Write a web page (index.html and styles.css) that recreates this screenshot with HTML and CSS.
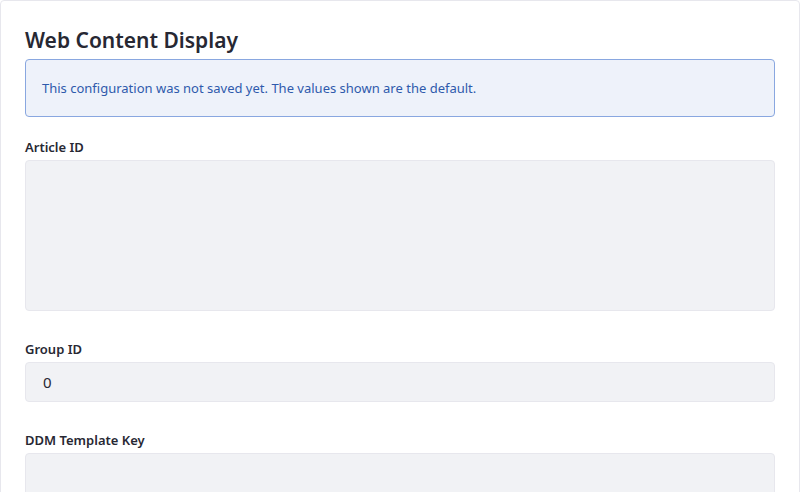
FILE: index.html
```html
<!DOCTYPE html>
<html>
<head>
<meta charset="utf-8">
<link rel="stylesheet" href="styles.css">
</head>
<body>
<div class="sheet">
  <h2 class="sheet-title">Web Content Display</h2>
  <div class="alert">This configuration was not saved yet. The values shown are the default.</div>
  <div class="form-group">
    <label class="label">Article ID</label>
    <div class="field field-area"></div>
  </div>
  <div class="form-group">
    <label class="label">Group ID</label>
    <div class="field">0</div>
  </div>
  <div class="form-group">
    <label class="label">DDM Template Key</label>
    <div class="field field-area"></div>
  </div>
</div>
</body>
</html>
```

FILE: styles.css
```css
html, body {
  margin: 0;
  padding: 0;
  background: #ffffff;
  overflow: hidden;
}
body {
  font-family: "Noto Sans", "Open Sans", sans-serif;
  color: #272833;
}
.sheet {
  box-sizing: border-box;
  width: 800px;
  min-height: 600px;
  border: 1px solid #e7e7ed;
  border-radius: 4px;
  padding: 24px 24px 0 24px;
  background: #fff;
}
.sheet-title {
  margin: 0 0 4px 0;
  font-size: 21px;
  font-weight: 600;
  line-height: 30px;
  color: #272833;
}
.alert {
  box-sizing: border-box;
  height: 58px;
  display: flex;
  align-items: center;
  padding: 0 16px;
  background: #eef2fa;
  border: 1px solid #89a7e0;
  border-radius: 4px;
  color: #2e5aac;
  font-size: 13px;
  margin-bottom: 20px;
}
.form-group {
  margin-bottom: 28px;
}
.label {
  display: block;
  font-size: 13px;
  font-weight: 600;
  line-height: 20px;
  margin-bottom: 3px;
  color: #272833;
}
.field {
  box-sizing: border-box;
  height: 40px;
  background: #f1f2f5;
  border: 1px solid #e7e7ed;
  border-radius: 4px;
  padding: 0 17px;
  display: flex;
  align-items: center;
  font-size: 15px;
  color: #272833;
}
.field-area {
  height: 151px;
}
```
